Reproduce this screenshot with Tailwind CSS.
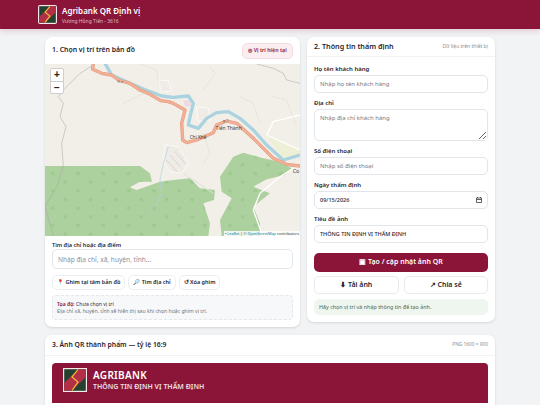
<!DOCTYPE html>
<html><head><meta charset="utf-8"><script src="https://cdn.jsdelivr.net/npm/@tailwindcss/browser@4"></script></head>
<body class="bg-[#f1f3f5] font-['Noto_Sans',sans-serif] text-[#1f2430] overflow-hidden h-[405px]">
<header class="h-[29px] bg-[#8b1538] flex items-center pl-[38px] gap-[5px] shadow-[0_2px_6px_rgba(139,21,56,0.18)]">
  <svg width="19" height="19" viewBox="0 0 24 24" class="rounded-[2px] shrink-0"><rect width="24" height="24" fill="#f4e8e8"/><rect x="1.500" y="1.500" width="21" height="21" fill="#26402f"/><path d="M1.500 22.500V15L15 1.500h7.500V9L9 22.500z" fill="#b32f48"/><path d="M15 2 9 9l6 5-6 8" fill="none" stroke="#eec330" stroke-width="1.400"/></svg>
  <div class="leading-none">
    <div class="text-white text-[8px] font-semibold leading-[12px]">Agribank QR Định vị</div>
    <div class="text-white/70 text-[5px] leading-[8px]">Vương Hồng Tiến - 3616</div>
  </div>
</header>
<main class="px-[45px] pt-[8px]">
  <div class="grid grid-cols-[255px_188px] gap-[7px]">
    <section class="bg-white rounded-[7px] shadow-sm h-[290px] overflow-hidden">
      <div class="h-[27px] flex items-center justify-between pl-[7px] pr-[7px]">
        <h2 class="text-[6.900px] font-semibold">1. Chọn vị trí trên bản đồ</h2>
        <button class="h-[16px] w-[51px] rounded-[5px] bg-[#fbeef1] border border-[#f3dce2] text-[#8b1538] text-[5.300px] font-semibold whitespace-nowrap">◎ Vị trí hiện tại</button>
      </div>
      <div class="relative h-[172px] w-[255px] bg-[#f2efe9] overflow-hidden">
        <svg width="255" height="172" viewBox="15 12 765 516" class="block">
          <defs><pattern id="trees" width="76" height="52" patternUnits="userSpaceOnUse" x="20" y="330"><g fill="#9cc98d"><path d="M12 10a6 5 0 0 1 12 0a5 5 0 0 1-5 5v4h-2v-4a5 5 0 0 1-5-5z"/><path d="M50 36a6 5 0 0 1 12 0a5 5 0 0 1-5 5v4h-2v-4a5 5 0 0 1-5-5z"/></g></pattern></defs>
          <rect x="15" y="12" width="765" height="516" fill="#f2efe9"/>
          <path d="M15 318H300L330 340L336 365L300 365L270 382L290 390L330 376L360 365L400 360L450 355L480 385L525 390L522 420L490 430L510 490L505 528H15Z" fill="#add19e"/>
          <path d="M545 528L540 480L575 415L545 395L540 350L580 290L610 278L670 295L720 305L755 325L735 345L680 358L640 380L690 400L640 440L660 490L660 528Z" fill="#add19e"/>
          <path d="M15 318H300L330 340L336 365L300 365L270 382L290 390L330 376L360 365L400 360L450 355L480 385L525 390L522 420L490 430L510 490L505 528H15Z" fill="url(#trees)"/>
          <path d="M545 528L540 480L575 415L545 395L540 350L580 290L610 278L670 295L720 305L755 325L735 345L680 358L640 380L690 400L640 440L660 490L660 528Z" fill="url(#trees)"/>
          <path d="M680 225L780 270V285L730 300Z" fill="#eef0d5"/>
          <path d="M430 120l20 2 3 16-18 2z" fill="#efd9e4"/>
          <g fill="none" stroke="#a9a3a8" stroke-width="1.500">
            <path d="M160 15L120 40L70 90L55 110L70 130L60 170L78 200L65 250L70 320L50 380L15 440L40 528"/>
            <path d="M650 12L700 25L730 40L740 60L780 70"/>
          </g>
          <g fill="none" stroke="#c7b59c" stroke-width="1.200" stroke-dasharray="4 4">
            <path d="M300 12L350 30L355 75M510 20L525 40L490 90M250 130L300 105L340 95M600 110L640 130L660 190M490 220L510 280L490 310M700 110L740 120L770 200"/>
          </g>
          <path d="M660 400L720 350L760 325M660 400L640 450L665 520M680 225L700 185L780 165M680 225L780 270" fill="none" stroke="#fff" stroke-width="4"/>
          <path d="M430 340L520 400" fill="none" stroke="#e4dfd8" stroke-width="3"/>
          <g fill="#efebe6" stroke="#fff" stroke-width="2"><path d="M355 60l30 2 10 30-30 5zM470 140l35 5 5 35-35 5zM375 255l40 5 30 50-20 30-35-5-20-30z"/></g>
          <path d="M390 285l30 35M405 275l30 35M380 300l30 35" stroke="#dcd8d2" stroke-width="5" stroke-dasharray="4 3" fill="none"/>
          <path d="M195 10L215 45L270 70L330 95L365 108L400 112L445 108L460 130L450 170L445 195L475 205L500 175L530 158L565 155L600 175L640 210L680 255L730 300L780 285" fill="none" stroke="#aad3df" stroke-width="10" stroke-linejoin="round"/>
          <path d="M360 360L365 400L350 430L325 458M385 260L370 310L360 360" fill="none" stroke="#aad3df" stroke-width="2"/>
          <path d="M160 10L158 28L185 40L215 45L235 60L270 70L300 90L325 100L362 122L385 125L400 130L435 150L425 190L428 240L440 248L470 240L520 218L530 195L560 183L590 190L640 235L700 295L740 313L780 318" fill="none" stroke="#dd9c85" stroke-width="10" stroke-linejoin="round"/>
          <path d="M160 10L158 28L185 40L215 45L235 60L270 70L300 90L325 100L362 122L385 125L400 130L435 150L425 190L428 240L440 248L470 240L520 218L530 195L560 183L590 190L640 235L700 295L740 313L780 318" fill="none" stroke="#f4ae93" stroke-width="7" stroke-linejoin="round"/>
          <g font-family="Noto Sans" fill="#3b3b3b"><text x="527" y="209" font-size="15">Tiến Thành</text><text x="449" y="238" font-size="14">Chí Khê</text><text x="758" y="339" font-size="16">Co</text><text x="232" y="66" font-size="9" transform="rotate(14 232 66)">Đ. 7</text><text x="550" y="187" font-size="9" transform="rotate(-8 550 187)">Đ. 7</text></g>
        </svg>
        <div class="absolute left-[5px] top-[4px] w-[14px] h-[26px] bg-white rounded-[2px] border border-[#cfcfcf] flex flex-col items-center text-[10px] font-bold leading-[12px] text-[#222] font-['Liberation_Sans']">
          <span class="h-[12.500px] border-b border-[#ccc] w-full text-center">+</span><span>−</span>
        </div>
        <div class="absolute right-0 bottom-0 bg-white/80 text-[3.800px] leading-[5px] px-[1px] text-[#333] whitespace-nowrap"><span class="text-[#0078a8]">▪ Leaflet</span> | © <span class="text-[#0078a8]">OpenStreetMap</span> contributors</div>
      </div>
      <div class="px-[7px] pt-[5px]">
        <label class="block text-[5.600px] font-semibold leading-[8px]">Tìm địa chỉ hoặc địa điểm</label>
        <input class="block w-full h-[20px] rounded-[5px] border border-[#e2e5ea] px-[5px] text-[6.600px] placeholder:text-[#8b909a] outline-none" placeholder="Nhập địa chỉ, xã, huyện, tỉnh...">
        <div class="flex gap-[3px] mt-[6px]">
          <button class="h-[15px] px-[4px] rounded-[5px] border border-[#eceef1] text-[5.500px] font-semibold whitespace-nowrap">📍 Ghim tại tâm bản đồ</button>
          <button class="h-[15px] px-[4px] rounded-[5px] border border-[#eceef1] text-[5.500px] font-semibold whitespace-nowrap">🔎 Tìm địa chỉ</button>
          <button class="h-[15px] px-[4px] rounded-[5px] border border-[#eceef1] text-[5.500px] font-semibold whitespace-nowrap">↺ Xóa ghim</button>
        </div>
        <div class="mt-[5px] h-[25px] rounded-[4px] bg-[#f7f8fa] border border-dashed border-[#e4e7ec] px-[4px] pt-[4.500px] text-[5.100px] leading-[7px]">
          <div><b class="text-[#8b1538] font-semibold">Tọa độ:</b> Chưa chọn vị trí</div>
          <div class="text-[#6b7280]">Địa chỉ xã, huyện, tỉnh sẽ hiển thị sau khi chọn hoặc ghim vị trí.</div>
        </div>
      </div>
    </section>
    <section class="bg-white rounded-[7px] shadow-sm h-[285px] overflow-hidden">
      <div class="h-[20px] flex items-center justify-between px-[7px] border-b border-[#f1f2f4]">
        <h2 class="text-[7.200px] font-semibold">2. Thông tin thẩm định</h2>
        <span class="text-[#8b909a] text-[5px]">Dữ liệu trên thiết bị</span>
      </div>
      <div class="px-[7px] pt-[8px]">
        <label class="block text-[6px] font-semibold leading-[8px] mb-[2px]">Họ tên khách hàng</label>
        <input class="block w-full h-[18px] rounded-[5px] border border-[#e2e5ea] px-[5px] text-[6px] placeholder:text-[#767b85] outline-none" placeholder="Nhập họ tên khách hàng">
        <label class="block text-[6px] font-semibold leading-[8px] mt-[6px] mb-[2px]">Địa chỉ</label>
        <textarea class="block w-full h-[32px] rounded-[5px] border border-[#e2e5ea] px-[5px] py-[4px] text-[6px] placeholder:text-[#767b85] outline-none" placeholder="Nhập địa chỉ khách hàng"></textarea>
        <label class="block text-[6px] font-semibold leading-[8px] mt-[6px] mb-[2px]">Số điện thoại</label>
        <input class="block w-full h-[18px] rounded-[5px] border border-[#e2e5ea] px-[5px] text-[6px] placeholder:text-[#767b85] outline-none" placeholder="Nhập số điện thoại">
        <label class="block text-[6px] font-semibold leading-[8px] mt-[6px] mb-[2px]">Ngày thẩm định</label>
        <div class="w-full h-[18px] rounded-[5px] border border-[#e2e5ea] px-[5px] text-[5.500px] flex items-center justify-between font-medium"><span>09/15/2026</span><svg width="6" height="6" viewBox="0 0 12 12"><path d="M1 2h10v9H1zM1 5h10M3 0v2M9 0v2" fill="none" stroke="#333" stroke-width="1.500"/></svg></div>
        <label class="block text-[6px] font-semibold leading-[8px] mt-[6px] mb-[2px]">Tiêu đề ảnh</label>
        <input class="block w-full h-[18px] rounded-[5px] border border-[#e2e5ea] px-[5px] text-[5.500px] font-medium outline-none" value="THÔNG TIN ĐỊNH VỊ THẨM ĐỊNH">
        <button class="block w-full h-[19px] mt-[10px] rounded-[5px] bg-[#8b1538] text-white text-[7px] font-semibold">▣ Tạo / cập nhật ảnh QR</button>
        <div class="grid grid-cols-2 gap-[5px] mt-[4px]">
          <button class="h-[18px] rounded-[5px] border border-[#e8eaee] text-[7px] font-semibold">⬇ Tải ảnh</button>
          <button class="h-[18px] rounded-[5px] border border-[#e8eaee] text-[7px] font-semibold">↗ Chia sẻ</button>
        </div>
        <div class="mt-[5px] h-[16px] rounded-[5px] bg-[#eef6ef] text-[#4a6a55] text-[5.400px] flex items-center px-[5px]">Hãy chọn vị trí và nhập thông tin để tạo ảnh.</div>
      </div>
    </section>
  </div>
  <section class="mt-[8px] bg-white rounded-t-[7px] shadow-sm h-[100px] overflow-hidden">
    <div class="h-[21px] flex items-center justify-between px-[7px] border-b border-[#f1f2f4]">
      <h2 class="text-[6.800px] font-semibold">3. Ảnh QR thành phẩm — tỷ lệ 16:9</h2>
      <span class="text-[#8b909a] text-[4.800px]">PNG 1600 × 900</span>
    </div>
    <div class="mx-[7px] mt-[7px] h-[40px] rounded-t-[4px] bg-[#8b1538] flex items-center pl-[11px] gap-[6px]">
      <svg width="24" height="24" viewBox="0 0 24 24" class="shrink-0 -mt-[6px]"><rect width="24" height="24" fill="#f4e8e8"/><rect x="1.200" y="1.200" width="21.600" height="21.600" fill="#26402f"/><path d="M1.200 22.800V15L15 1.200h7.800V9L9 22.800z" fill="#b32f48"/><path d="M15 1.500 9 9l6 5-6 8.500" fill="none" stroke="#eec330" stroke-width="1.200"/></svg>
      <div class="-mt-[6px]">
        <div class="text-white text-[10px] font-semibold leading-[13px] tracking-[0.3px]">AGRIBANK</div>
        <div class="text-white/85 text-[7px] font-semibold leading-[10px]">THÔNG TIN ĐỊNH VỊ THẨM ĐỊNH</div>
      </div>
    </div>
  </section>
</main>
</body></html>
